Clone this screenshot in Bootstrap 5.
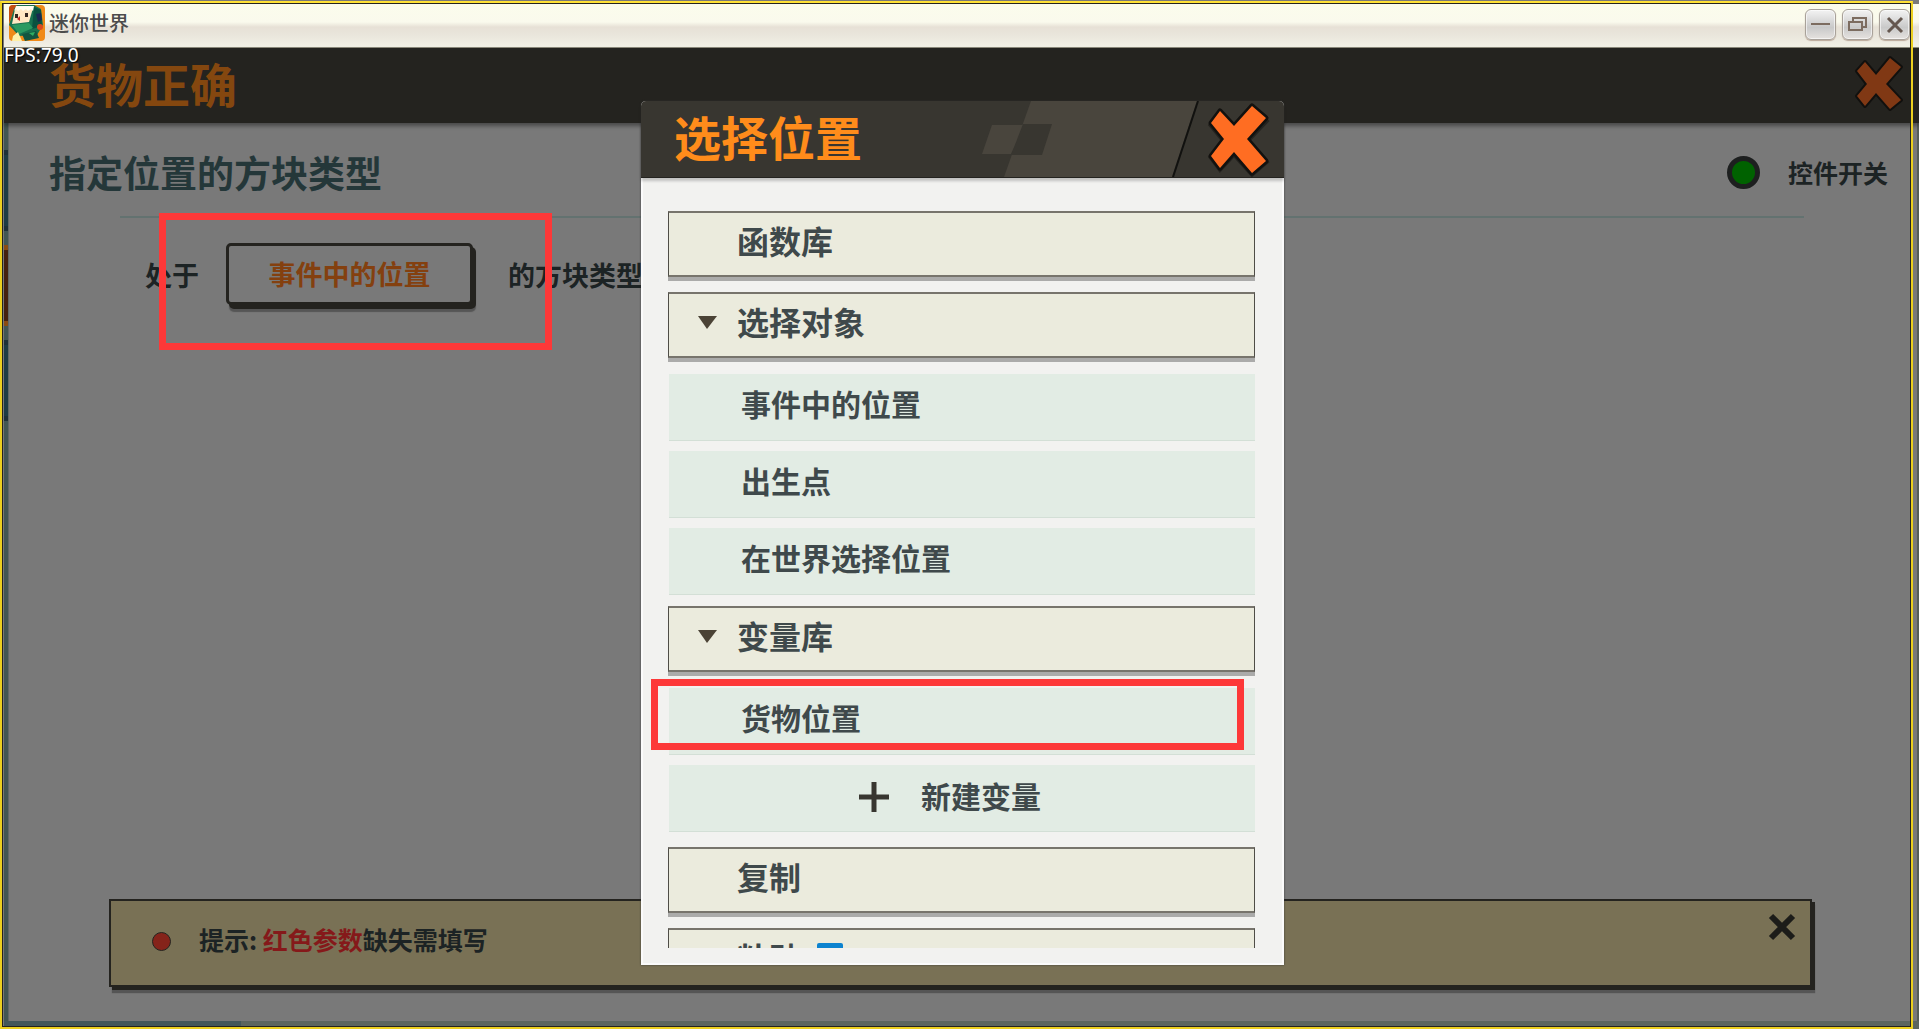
<!DOCTYPE html>
<html lang="zh-CN">
<head>
<meta charset="utf-8">
<meta name="viewport" content="width=device-width, initial-scale=1">
<title>迷你世界</title>
<link href="https://cdn.jsdelivr.net/npm/bootstrap@5.3.0/dist/css/bootstrap.min.css" rel="stylesheet">
<style>
body{font-family:"Noto Sans CJK SC",sans-serif;font-weight:700;background:#797979;color:#1c2324;line-height:1}
button{font:inherit;color:inherit;line-height:1}
.app-window{padding:4px 0 0 4px;overflow:hidden}
.frame-line{inset:1px 6px 0 0;border:2px solid #ecd01f;border-top-color:#ffe135;pointer-events:none;z-index:30;outline:1px solid #24231f;outline-offset:-3px}
.title-bar{height:44px;background:linear-gradient(#fbfcec 0,#fafaed 18px,#e7e1d6 23px,#e9e5db 30px,#f2f1e6 43px);border-bottom:1px solid #8c8b7c;padding:0 9px 6px 5px;font-weight:500;font-size:20px;color:#4c4c4c}
.win-btn{width:31px;height:31px;padding:0;border:1px solid #a8a199;border-radius:6px;background:linear-gradient(#f3f3f3,#c9c9c9 60%,#e6e2df);box-shadow:inset 0 0 0 1px #fff9,0 1px 1px #bba99a}
.win-btns{gap:6px}
.win-btn svg{display:block;margin:auto}
.fps{left:4px;top:46px;font:19px/19px "Noto Sans",sans-serif;color:#fff;text-shadow:1px 1px 1px #000;z-index:5}
.top-bar{height:75px;background:#24231f;padding:0 15px 6px 45px;box-shadow:0 3px 4px #0006;position:relative}
.heading-text{font-size:47px;line-height:47px;color:#84470f}
.plain-btn{background:none;border:0;padding:0}
.plain-btn svg{display:block}
.work-area{flex:1;min-height:0}
.side-strip{width:4px;background:#425653;padding-top:27px;gap:14px;box-shadow:1px 0 0 #626766}
.right-strip{width:2px;background:#555c57}
.side-tab{height:81px;background:#1e3b44;border:solid #1f3038;border-width:5px 0}
.side-tab.on{background:#45210f;border-color:#8a4b12}
.main-pane{flex:1;padding:31px 3px 29px 41px}
.sub-title{font-size:37px;line-height:37px;color:#243739}
.switch-row{font-size:25px;gap:28px;padding-right:26px}
.lamp{appearance:none;width:33px;height:33px;border-radius:50%;border:5px solid #1d1f1f;background:#006200;margin:0}
.pane-rule{height:2px;background:#637270;margin:25px 110px 0 71px}
.param-row{font-size:27px;padding:25px 0 0 96px;gap:27px}
.param-btn{width:247px;height:62px;border:3px solid #24231f;border-radius:5px;background:#797979;color:#84400f;box-shadow:3px 4px 0 #24231f,3px 7px 1px #555;padding:0 0 2px}
.callout-box{border:7px solid #fd3838;pointer-events:none;z-index:20}
.callout-one{left:159px;top:213px;width:393px;height:137px}
.callout-two{left:651px;top:679px;width:593px;height:71px}
.tip-bar{margin:0 102px 5px 60px;height:88px;background:#797155;border:2px solid #24231f;box-shadow:3px 3px 0 #24231f,3px 6px 1px #555;padding:0 14px 4px 41px;font-size:25px;position:relative}
.tip-dot{width:19px;height:19px;border-radius:50%;background:#85231a;border:1px solid #24231f;margin-right:28px}
.tip-red{color:#85191a}
.tip-text{padding-bottom:3px}
.foot-strip{height:8px;background:linear-gradient(90deg,#43575a 237px,#5b655f 237px)}
.picker{left:641px;top:101px;width:643px;height:864px;background:#f2f2f0;border:2px solid #fbfbfb;border-top:0;border-radius:5px 5px 0 0;z-index:10;box-shadow:0 0 2px #333}
.picker-head{height:77px;background:#383630;margin:0 -2px;padding:0 15px 0 33px;border-radius:5px 5px 0 0;position:relative;box-shadow:0 3px 3px #0003;border-bottom:1px solid #24231f}
.picker-head .heading-text{color:#ff8c1b;position:relative;padding-bottom:8px}
.head-deco{left:340px;top:0;width:220px;height:76px}
.picker-list{margin:33px 27px 0 25px;height:737px;overflow:hidden;color:#3f494b}
.group-row,.item-row{display:flex;align-items:center;width:100%;border:0;text-align:left}
.group-row{height:66px;margin-bottom:15px;background:#ebebdd;border:2px solid #77746c;border-color:#77746c #4f4d47;border-width:2px 1px;box-shadow:0 4px 0 #ababaa;font-size:32px;padding:0 0 9px 29px;flex:none}
.mark-slot{width:39px;display:inline-flex;padding-top:5px}
.item-row{height:67px;background:#e2ece4;border-bottom:1px solid #d3dfd6;font-size:30px;padding:0 0 8px 72px}
.item-group{display:flex;flex-direction:column;gap:10px;padding:1px 0 11px 1px}
.add-row{justify-content:center;gap:32px;padding:0 24px 6px 0}
</style>
</head>
<body>
<div class="app-window position-relative vh-100 d-flex flex-column">
  <div class="frame-line position-absolute"></div>
  <header class="title-bar d-flex align-items-center flex-shrink-0">
    <svg width="36" height="36" viewBox="0 0 36 36" class="me-1" aria-hidden="true">
      <defs><clipPath id="r"><rect width="36" height="36" rx="4"/></clipPath></defs>
      <g clip-path="url(#r)"><rect width="36" height="36" fill="#f08a18"/><path d="M0 0h8L4 8 0 18z" fill="#c34d12"/>
      <path d="M0 20 5 4 8 0H25L32 4 34 20 28 30 10 31z" fill="#19714f"/><path d="M25 2 32 5 33 21 23 24z" fill="#0b5140"/><path d="M27 9 32 8 33 15 29 17z" fill="#1b2850"/>
      <path d="M6 4 24 3 20 17 3 19z" fill="#ffe7c3"/><path d="M7 1 25 1 24 6 22 4 19 6 17 4 14 6 12 4 9 6 7 4 5 6z" fill="#fffdf0"/><path d="M6 9h3v4H6zM16 8h3v4h-3z" fill="#33251f"/><path d="M8 14 11 11 11 16z" fill="#c72720"/>
      <path d="M3 20 20 18 24 23 10 29z" fill="#2b9a61"/><path d="M4 31 9 27 13 36H3z" fill="#fff1a9"/><path d="M13 29 27 26 30 33 16 36z" fill="#135540"/><path d="M20 28 26 27 24 31z" fill="#2fae62"/><circle cx="31" cy="22" r="3" fill="#db4a20"/></g>
    </svg>
    <span class="me-auto">迷你世界</span>
    <div class="d-flex win-btns pt-1">
      <button class="win-btn" aria-label="最小化"><svg width="19" height="19"><path d="M0 9h19" stroke="#7c6c60" stroke-width="2"/></svg></button>
      <button class="win-btn" aria-label="还原"><svg width="21" height="19" fill="none" stroke="#7c6c60" stroke-width="2"><path d="M6 6V3h13v9h-3"/><path d="M2 7h13v8H2z"/></svg></button>
      <button class="win-btn" aria-label="关闭"><svg width="18" height="18"><path d="m2 2 14 14M16 2 2 16" stroke="#65574f" stroke-width="3"/></svg></button>
    </div>
  </header>
  <div class="fps position-absolute">FPS:79.0</div>
  <div class="top-bar d-flex align-items-center justify-content-between flex-shrink-0">
    <h1 class="heading-text fw-bold m-0">货物正确</h1>
    <button class="plain-btn" aria-label="关闭编辑"><svg width="52" height="60" viewBox="0 0 52 60"><path d="M13 11 24 24 38 7 49 16 34 33 49 49 38 58 24 42 13 55 5 45 15 33 5 20z" fill="#000" opacity=".4"/><path d="M13 9 24 22 38 5 49 14 34 31 49 47 38 56 24 40 13 53 5 43 15 31 5 18z" fill="#803814" stroke="#11100e" stroke-width="4" stroke-linejoin="round" paint-order="stroke"/></svg></button>
  </div>
  <div class="work-area d-flex">
    <nav class="side-strip d-flex flex-column" aria-label="分页"><div class="side-tab"></div><div class="side-tab on"></div><div class="side-tab"></div></nav>
    <main class="main-pane d-flex flex-column">
      <div class="d-flex justify-content-between align-items-center">
        <h2 class="sub-title fw-bold m-0">指定位置的方块类型</h2>
        <label class="switch-row d-flex align-items-center"><input type="radio" class="lamp" checked>控件开关</label>
      </div>
      <div class="pane-rule"></div>
      <div class="param-row d-flex align-items-center"><span>处于</span><button class="param-btn">事件中的位置</button><span class="ps-2">的方块类型</span></div>
      <div class="tip-bar d-flex align-items-center mt-auto">
        <span class="tip-dot"></span><span class="tip-text me-auto">提示: <span class="tip-red">红色参数</span>缺失需填写</span>
        <button class="plain-btn align-self-start pt-2 mt-1" aria-label="关闭提示"><svg width="28" height="28"><path d="M3 3 25 25M25 3 3 25" stroke="#1c1c19" stroke-width="6"/></svg></button>
      </div>
    </main>
    <div class="right-strip"></div>
  </div>
  <div class="foot-strip flex-shrink-0"></div>

  <div class="callout-box callout-one position-absolute"></div>

  <section class="picker position-absolute" role="dialog" aria-labelledby="pick-title">
    <div class="picker-head d-flex align-items-center justify-content-between">
      <svg class="head-deco position-absolute" viewBox="0 0 220 76" aria-hidden="true"><path d="M50 0H216L191 76H23z" fill="#49453d"/><path d="M11 24H44L30 53H1z" fill="#49453d"/><path d="M42 23H71L61 54H30z" fill="#383630"/><path d="M217 0 192 76" stroke="#11110f" stroke-width="2"/></svg>
      <h2 id="pick-title" class="heading-text fw-bold m-0">选择位置</h2>
      <button class="plain-btn" aria-label="关闭选择"><svg width="62" height="76" viewBox="1206 101 62 76" overflow="visible"><path d="M1219 113 1233 130 1251 108 1265 121 1246 141 1265 162 1251 174 1233 154 1219 169 1210 157 1223 141 1210 125z" fill="#000" opacity=".35" stroke="#000" stroke-width="5"/><path d="M1219 111 1233 126 1251 106 1265 118 1246 139 1265 161 1251 173 1233 152 1219 168 1210 156 1223 139 1210 123z" fill="#ff6d22" stroke="#12110f" stroke-width="5" stroke-linejoin="round" paint-order="stroke"/></svg></button>
    </div>
    <div class="picker-list">
      <button class="group-row"><span class="mark-slot"></span>函数库</button>
      <button class="group-row"><span class="mark-slot"><svg width="19" height="14"><path d="M0 0h19L9 13z" fill="#4b4336"/></svg></span>选择对象</button>
      <div class="item-group">
        <button class="item-row">事件中的位置</button>
        <button class="item-row">出生点</button>
        <button class="item-row">在世界选择位置</button>
      </div>
      <button class="group-row"><span class="mark-slot"><svg width="19" height="14"><path d="M0 0h19L9 13z" fill="#4b4336"/></svg></span>变量库</button>
      <div class="item-group">
        <button class="item-row">货物位置</button>
        <button class="item-row add-row"><svg class="mt-1" width="30" height="30"><path d="M0 15h30M15 0v30" stroke="#383630" stroke-width="5"/></svg>新建变量</button>
      </div>
      <button class="group-row mt-1"><span class="mark-slot"></span>复制</button>
      <button class="group-row"><span class="mark-slot"></span>粘贴<svg class="ms-3" width="26" height="28"><rect width="26" height="28" rx="2" fill="#0c83cf"/></svg></button>
    </div>
  </section>
  <div class="callout-box callout-two position-absolute"></div>
</div>
<script src="https://cdn.jsdelivr.net/npm/bootstrap@5.3.0/dist/js/bootstrap.bundle.min.js"></script>
</body>
</html>
